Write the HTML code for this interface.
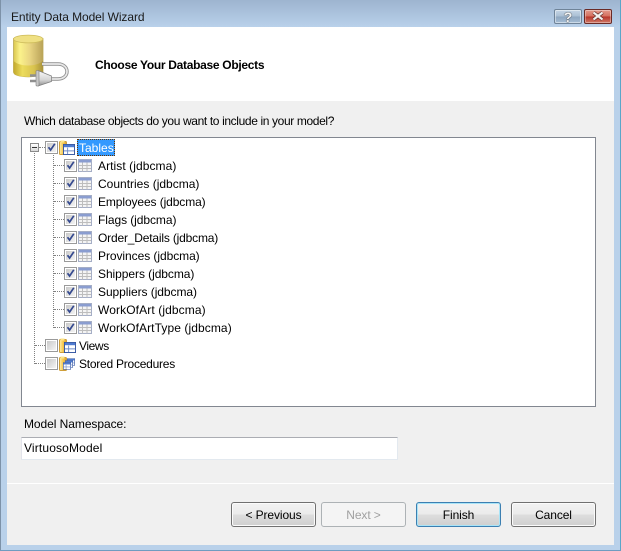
<!DOCTYPE html>
<html><head><meta charset="utf-8">
<style>
html,body{margin:0;padding:0;width:621px;height:551px;overflow:hidden;background:#b9d1ea}
body{position:relative;font-family:"Liberation Sans",sans-serif;font-size:12px;color:#000}
.a{position:absolute}
.t{position:absolute;white-space:nowrap;line-height:16px;height:16px}
.btn{position:absolute;top:502px;width:83px;height:23px;border:1px solid #707070;border-radius:3px;background:linear-gradient(#f2f2f2 0,#ebebeb 48%,#dddddd 52%,#cfcfcf 100%);box-shadow:inset 0 0 0 1px #fbfbfb;text-align:center;line-height:24px;letter-spacing:-.1px}
.v{position:absolute;border-left:1px dotted #808080;width:0}
.h{position:absolute;border-top:1px dotted #808080;height:0}
svg{position:absolute;overflow:visible}
</style></head>
<body>
<svg width="0" height="0" style="position:absolute"><defs>
<linearGradient id="cb" x1="0" y1="0" x2="1" y2="1"><stop offset="0" stop-color="#c9c9c9"/><stop offset="1" stop-color="#f4f4f4"/></linearGradient>
<linearGradient id="fd" x1="0" y1="0" x2="1" y2="0"><stop offset="0" stop-color="#fff0b0"/><stop offset=".5" stop-color="#f6c84e"/><stop offset="1" stop-color="#dca12c"/></linearGradient>
<symbol id="chk" viewBox="0 0 13 13" width="13" height="13"><rect x=".5" y=".5" width="12" height="12" fill="#fff" stroke="#9a9a9a"/><rect x="2" y="2" width="9" height="9" fill="url(#cb)"/><path d="M3.5 6.2 L5.6 9 L9.8 2.8" fill="none" stroke="#34498f" stroke-width="1.7"/></symbol>
<symbol id="unc" viewBox="0 0 13 13" width="13" height="13"><rect x=".5" y=".5" width="12" height="12" fill="#fff" stroke="#9a9a9a"/><rect x="2" y="2" width="9" height="9" fill="url(#cb)"/></symbol>
<symbol id="tbl" viewBox="0 0 14 13" width="14" height="13"><rect x=".5" y=".5" width="13" height="12" fill="#f4f4f4" stroke="#a5aec6"/><rect x="1" y="1" width="12" height="2.5" fill="#8a9dd0"/><path d="M1 6.5H13M1 9.5H13M4.5 3.5V12.5M9 3.5V12.5" stroke="#bdbdbd" stroke-width="1" fill="none"/></symbol>
<symbol id="fold" viewBox="0 0 9 15" width="9" height="15"><rect x=".5" y="1.5" width="7" height="13" rx="1" fill="url(#fd)" stroke="#cf9f3a"/><rect x="1.5" y=".5" width="4" height="2" fill="#fde58a"/></symbol>
<symbol id="win" viewBox="0 0 13 12" width="13" height="12"><rect x=".5" y=".5" width="12" height="11" fill="#fff" stroke="#2c4f9e"/><rect x="1" y="1" width="11" height="2.5" fill="#4f7bd0"/><path d="M5 4V11M1 7.5H12" stroke="#6d8bc9" fill="none"/></symbol>
<linearGradient id="cyl" x1="0" y1="0" x2="1" y2="0"><stop offset="0" stop-color="#d9c64e"/><stop offset=".22" stop-color="#fbf28a"/><stop offset=".55" stop-color="#e9d582"/><stop offset="1" stop-color="#b9a258"/></linearGradient>
<linearGradient id="cyl2" x1="0" y1="0" x2="1" y2="0"><stop offset="0" stop-color="#c2a92c"/><stop offset=".3" stop-color="#ecdc5c"/><stop offset=".7" stop-color="#d8c24e"/><stop offset="1" stop-color="#a8923a"/></linearGradient>
<linearGradient id="plug" x1="0" y1="0" x2="0" y2="1"><stop offset="0" stop-color="#fafafa"/><stop offset=".6" stop-color="#d5d5d5"/><stop offset="1" stop-color="#8f8f8f"/></linearGradient>
</defs></svg>

<!-- window chrome -->
<div class="a" style="left:0;top:0;width:621px;height:27px;background:linear-gradient(#9db4cf,#b9d1ea)"></div>
<div class="a" style="left:0;top:0;width:1px;height:551px;background:#7d92a8"></div>
<div class="a" style="left:620px;top:0;width:1px;height:551px;background:#5aa6c9"></div>
<div class="a" style="left:0;top:550px;width:621px;height:1px;background:#6f9cc0"></div>
<div class="t" style="left:11px;top:9px;font-size:12px;color:#1a1a1a;letter-spacing:-.08px">Entity Data Model Wizard</div>

<!-- caption buttons -->
<div class="a" style="left:554px;top:9px;width:26px;height:13px;border:1px solid #6f8398;border-radius:2px;background:linear-gradient(#c6d6e6 0,#a9bed3 50%,#8ea6bf 52%,#a5bed6 100%);box-shadow:inset 0 0 0 1px rgba(255,255,255,.45);text-align:center;font:bold 14px/15px 'Liberation Sans',sans-serif;color:#f4f4f4;text-shadow:0 0 1px #333,0 0 1px #333">?</div>
<div class="a" style="left:584px;top:9px;width:26px;height:13px;border:1px solid #6a2a25;border-radius:2px;background:linear-gradient(#e39a8c 0,#d5705f 48%,#b8352a 52%,#cf7a68 100%);box-shadow:inset 0 0 0 1px rgba(255,255,255,.35)"></div>
<svg style="left:591px;top:11px" width="14" height="10"><path d="M2.5 1.5 L11.5 8.5 M11.5 1.5 L2.5 8.5" stroke="#5a2a28" stroke-width="3.6"/><path d="M2.5 1.5 L11.5 8.5 M11.5 1.5 L2.5 8.5" stroke="#f3f0ee" stroke-width="2.2"/></svg>

<!-- client -->
<div class="a" style="left:7px;top:27px;width:607px;height:518px;background:#f0f0f0"></div>
<div class="a" style="left:7px;top:27px;width:607px;height:74px;background:#fff"></div>

<!-- header icon -->
<svg style="left:12px;top:34px" width="60" height="56" viewBox="0 0 60 56">
<path d="M1.5 4.5 V38 C1.5 44.5 31 44.5 31 38 V4.5 Z" fill="url(#cyl)" stroke="#bba857" stroke-width=".8"/>
<path d="M1.5 27 C8 33 24 33 31 27 V38 C31 44.5 1.5 44.5 1.5 38 Z" fill="url(#cyl2)"/>
<ellipse cx="16.2" cy="5" rx="14.7" ry="3.9" fill="#efe083" stroke="#cdbb5a" stroke-width=".7"/>
<path d="M30 30 H46 C58 30 58 45 46 45 H38" fill="none" stroke="#8f8f8f" stroke-width="3.4"/>
<path d="M30 30 H46 C58 30 58 45 46 45 H38" fill="none" stroke="#e8e8e8" stroke-width="1.7"/>
<path d="M26 36.5 L39.5 42 V47.5 L26 52 Z" fill="url(#plug)" stroke="#7d7d7d" stroke-width=".7"/>
<rect x="24" y="36.5" width="3" height="15.5" rx="1" fill="#c8c8c8" stroke="#7d7d7d" stroke-width=".6"/>
<path d="M24 41.5 H18 M24 47 H18" stroke="#8f8f8f" stroke-width="2.4"/>
</svg>

<div class="t" style="left:95px;top:57px;font-weight:bold;font-size:12px;letter-spacing:-.3px">Choose Your Database Objects</div>
<div class="t" style="left:24px;top:113px;letter-spacing:-.37px">Which database objects do you want to include in your model?</div>

<!-- tree box -->
<div class="a" style="left:21px;top:137px;width:573px;height:268px;border:1px solid #828790;background:#fff"></div>

<!-- tree lines -->
<div class="v" style="left:34px;top:153px;height:211px"></div>
<div class="v" style="left:53px;top:153px;height:175px"></div>
<div class="h" style="left:39px;top:147px;width:6px"></div>
<div class="h" style="left:35px;top:345px;width:10px"></div>
<div class="h" style="left:35px;top:363px;width:10px"></div>
<div class="h" style="left:54px;top:165px;width:10px"></div>
<div class="h" style="left:54px;top:183px;width:10px"></div>
<div class="h" style="left:54px;top:201px;width:10px"></div>
<div class="h" style="left:54px;top:219px;width:10px"></div>
<div class="h" style="left:54px;top:237px;width:10px"></div>
<div class="h" style="left:54px;top:255px;width:10px"></div>
<div class="h" style="left:54px;top:273px;width:10px"></div>
<div class="h" style="left:54px;top:291px;width:10px"></div>
<div class="h" style="left:54px;top:309px;width:10px"></div>
<div class="h" style="left:54px;top:327px;width:10px"></div>

<!-- expander -->
<div class="a" style="left:30px;top:143px;width:7px;height:7px;border:1px solid #8a8a8a;background:linear-gradient(#fff,#d8d8d8)"></div>
<div class="a" style="left:32px;top:147px;width:5px;height:1px;background:#333"></div>

<!-- root -->
<svg style="left:45px;top:141px" width="13" height="13"><use href="#chk"/></svg>
<svg style="left:59px;top:140px" width="9" height="15"><use href="#fold"/></svg>
<svg style="left:63px;top:144px" width="12" height="11" viewBox="0 0 13 12"><use href="#win"/></svg>
<div class="a" style="left:77px;top:139px;width:38px;height:17px;background:#3399ff;outline:1px dotted #663300;outline-offset:-1px"></div>
<div class="t" style="left:79px;top:140px;color:#fff">Tables</div>

<!-- children -->
<svg style="left:64px;top:159px" width="13" height="13"><use href="#chk"/></svg><svg style="left:78px;top:159px" width="14" height="13"><use href="#tbl"/></svg><div class="t" style="left:98px;top:158px;letter-spacing:.07px">Artist (jdbcma)</div>
<svg style="left:64px;top:177px" width="13" height="13"><use href="#chk"/></svg><svg style="left:78px;top:177px" width="14" height="13"><use href="#tbl"/></svg><div class="t" style="left:98px;top:176px">Countries (jdbcma)</div>
<svg style="left:64px;top:195px" width="13" height="13"><use href="#chk"/></svg><svg style="left:78px;top:195px" width="14" height="13"><use href="#tbl"/></svg><div class="t" style="left:98px;top:194px;letter-spacing:-.1px">Employees (jdbcma)</div>
<svg style="left:64px;top:213px" width="13" height="13"><use href="#chk"/></svg><svg style="left:78px;top:213px" width="14" height="13"><use href="#tbl"/></svg><div class="t" style="left:98px;top:212px;letter-spacing:-.07px">Flags (jdbcma)</div>
<svg style="left:64px;top:231px" width="13" height="13"><use href="#chk"/></svg><svg style="left:78px;top:231px" width="14" height="13"><use href="#tbl"/></svg><div class="t" style="left:98px;top:230px;letter-spacing:-.18px">Order_Details (jdbcma)</div>
<svg style="left:64px;top:249px" width="13" height="13"><use href="#chk"/></svg><svg style="left:78px;top:249px" width="14" height="13"><use href="#tbl"/></svg><div class="t" style="left:98px;top:248px;letter-spacing:-.06px">Provinces (jdbcma)</div>
<svg style="left:64px;top:267px" width="13" height="13"><use href="#chk"/></svg><svg style="left:78px;top:267px" width="14" height="13"><use href="#tbl"/></svg><div class="t" style="left:98px;top:266px;letter-spacing:-.06px">Shippers (jdbcma)</div>
<svg style="left:64px;top:285px" width="13" height="13"><use href="#chk"/></svg><svg style="left:78px;top:285px" width="14" height="13"><use href="#tbl"/></svg><div class="t" style="left:98px;top:284px;letter-spacing:-.06px">Suppliers (jdbcma)</div>
<svg style="left:64px;top:303px" width="13" height="13"><use href="#chk"/></svg><svg style="left:78px;top:303px" width="14" height="13"><use href="#tbl"/></svg><div class="t" style="left:98px;top:302px;letter-spacing:.11px">WorkOfArt (jdbcma)</div>
<svg style="left:64px;top:321px" width="13" height="13"><use href="#chk"/></svg><svg style="left:78px;top:321px" width="14" height="13"><use href="#tbl"/></svg><div class="t" style="left:98px;top:320px;letter-spacing:.09px">WorkOfArtType (jdbcma)</div>

<!-- Views -->
<svg style="left:45px;top:339px" width="13" height="13"><use href="#unc"/></svg>
<svg style="left:59px;top:338px" width="9" height="15"><use href="#fold"/></svg>
<svg style="left:64px;top:342px" width="12" height="11" viewBox="0 0 13 12"><use href="#win"/></svg>
<div class="t" style="left:79px;top:338px;letter-spacing:-.4px">Views</div>

<!-- Stored Procedures -->
<svg style="left:45px;top:357px" width="13" height="13"><use href="#unc"/></svg>
<svg style="left:59px;top:356px" width="9" height="15"><use href="#fold"/></svg>
<svg style="left:67px;top:358px" width="8" height="8" viewBox="0 0 13 12"><use href="#win"/></svg>
<svg style="left:65px;top:360px" width="8" height="8" viewBox="0 0 13 12"><use href="#win"/></svg>
<svg style="left:63px;top:362px" width="8" height="8" viewBox="0 0 13 12"><use href="#win"/></svg>
<div class="t" style="left:79px;top:356px;letter-spacing:-.24px">Stored Procedures</div>

<!-- namespace -->
<div class="t" style="left:24px;top:416px;letter-spacing:-.06px">Model Namespace:</div>
<div class="a" style="left:21px;top:437px;width:375px;height:21px;background:#fff;border:1px solid #e3e9ef;border-top-color:#abadb3;border-left-color:#e2e3ea"></div>
<div class="t" style="left:24px;top:440px;letter-spacing:.15px">VirtuosoModel</div>

<!-- separator -->
<div class="a" style="left:7px;top:483px;width:607px;height:1px;background:#fff"></div>

<!-- buttons -->
<div class="btn" style="left:231px">&lt; Previous</div>
<div class="btn" style="left:321px;border-color:#adb2b5;background:#f4f4f4;color:#a0a0a0;box-shadow:none">Next &gt;</div>
<div class="btn" style="left:416px;border-color:#3c7fb1;box-shadow:inset 0 0 0 1px #a9e4f7">Finish</div>
<div class="btn" style="left:511px">Cancel</div>
</body></html>
